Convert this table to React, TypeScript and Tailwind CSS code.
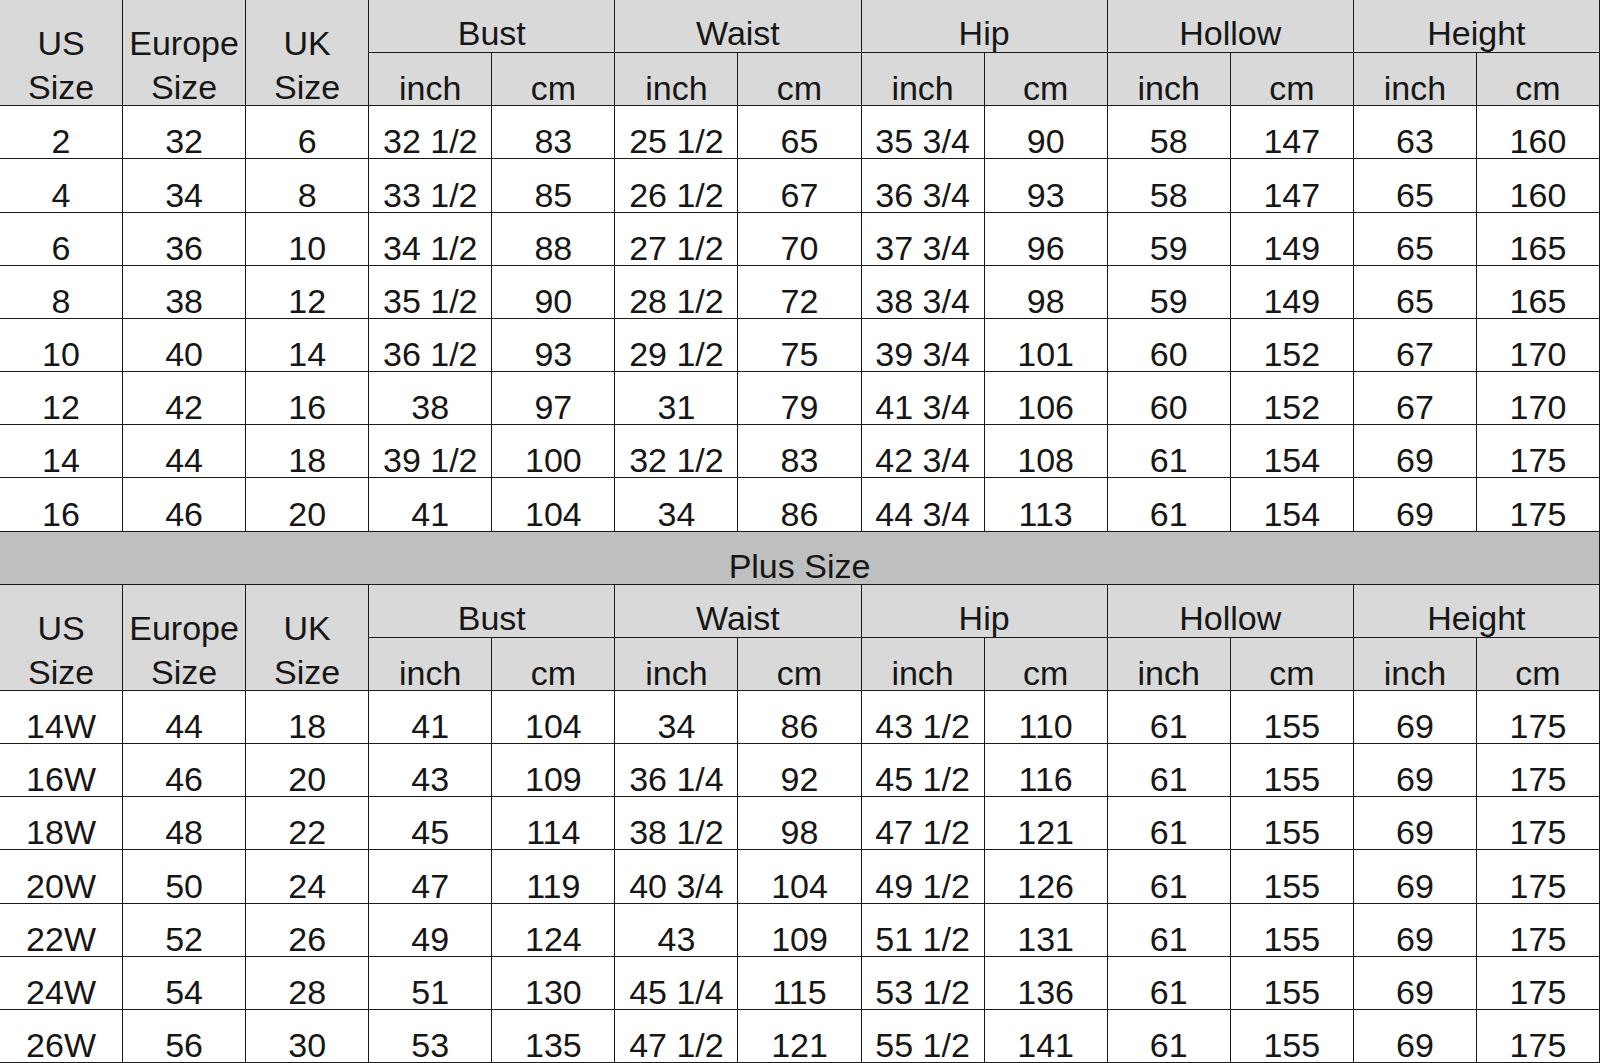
import React from "react";

const regular: string[][] = [
  ["2", "32", "6", "32 1/2", "83", "25 1/2", "65", "35 3/4", "90", "58", "147", "63", "160"],
  ["4", "34", "8", "33 1/2", "85", "26 1/2", "67", "36 3/4", "93", "58", "147", "65", "160"],
  ["6", "36", "10", "34 1/2", "88", "27 1/2", "70", "37 3/4", "96", "59", "149", "65", "165"],
  ["8", "38", "12", "35 1/2", "90", "28 1/2", "72", "38 3/4", "98", "59", "149", "65", "165"],
  ["10", "40", "14", "36 1/2", "93", "29 1/2", "75", "39 3/4", "101", "60", "152", "67", "170"],
  ["12", "42", "16", "38", "97", "31", "79", "41 3/4", "106", "60", "152", "67", "170"],
  ["14", "44", "18", "39 1/2", "100", "32 1/2", "83", "42 3/4", "108", "61", "154", "69", "175"],
  ["16", "46", "20", "41", "104", "34", "86", "44 3/4", "113", "61", "154", "69", "175"],
];

const plus: string[][] = [
  ["14W", "44", "18", "41", "104", "34", "86", "43 1/2", "110", "61", "155", "69", "175"],
  ["16W", "46", "20", "43", "109", "36 1/4", "92", "45 1/2", "116", "61", "155", "69", "175"],
  ["18W", "48", "22", "45", "114", "38 1/2", "98", "47 1/2", "121", "61", "155", "69", "175"],
  ["20W", "50", "24", "47", "119", "40 3/4", "104", "49 1/2", "126", "61", "155", "69", "175"],
  ["22W", "52", "26", "49", "124", "43", "109", "51 1/2", "131", "61", "155", "69", "175"],
  ["24W", "54", "28", "51", "130", "45 1/4", "115", "53 1/2", "136", "61", "155", "69", "175"],
  ["26W", "56", "30", "53", "135", "47 1/2", "121", "55 1/2", "141", "61", "155", "69", "175"],
];

const groups = ["Bust", "Waist", "Hip", "Hollow", "Height"];

function Header() {
  return (
    <>
      {["US", "Europe", "UK"].map((t) => (
        <div
          key={t}
          className="row-span-2 flex items-end justify-center border-b border-r border-[#1a1a1a] bg-[#d9d9d9] leading-[44px]"
        >
          <div className="flex translate-y-[4px] flex-col items-center">
            <span>{t}</span>
            <span>Size</span>
          </div>
        </div>
      ))}
      {groups.map((g) => (
        <div
          key={g}
          className="col-span-2 flex items-end justify-center border-b border-r border-[#1a1a1a] bg-[#d9d9d9] pb-[2px] leading-none"
        >
          {g}
        </div>
      ))}
      {groups.map((g) => (
        <React.Fragment key={g + "u"}>
          <div className="flex items-end justify-center border-b border-r border-[#1a1a1a] bg-[#d9d9d9] leading-none">
            inch
          </div>
          <div className="flex items-end justify-center border-b border-r border-[#1a1a1a] bg-[#d9d9d9] leading-none">
            cm
          </div>
        </React.Fragment>
      ))}
    </>
  );
}

function Rows({ data }: { data: string[][] }) {
  return (
    <>
      {data.map((row, i) =>
        row.map((c, j) => (
          <div
            key={i + "-" + j}
            className="flex items-end justify-center border-b border-r border-[#1a1a1a] bg-white leading-none"
          >
            {c}
          </div>
        ))
      )}
    </>
  );
}

export default function App() {
  return (
    <div
      className="grid h-[1063px] w-[1600px] grid-cols-[repeat(13,1fr)] grid-rows-[repeat(20,1fr)] bg-white text-[34px] text-[#161616]"
      style={{ fontFamily: '"Liberation Sans", Arial, sans-serif' }}
    >
      <Header />
      <Rows data={regular} />
      <div className="col-span-13 flex items-end justify-center border-b border-r border-[#1a1a1a] bg-[#c0bfbf] pb-px leading-none">
        Plus Size
      </div>
      <Header />
      <Rows data={plus} />
    </div>
  );
}
